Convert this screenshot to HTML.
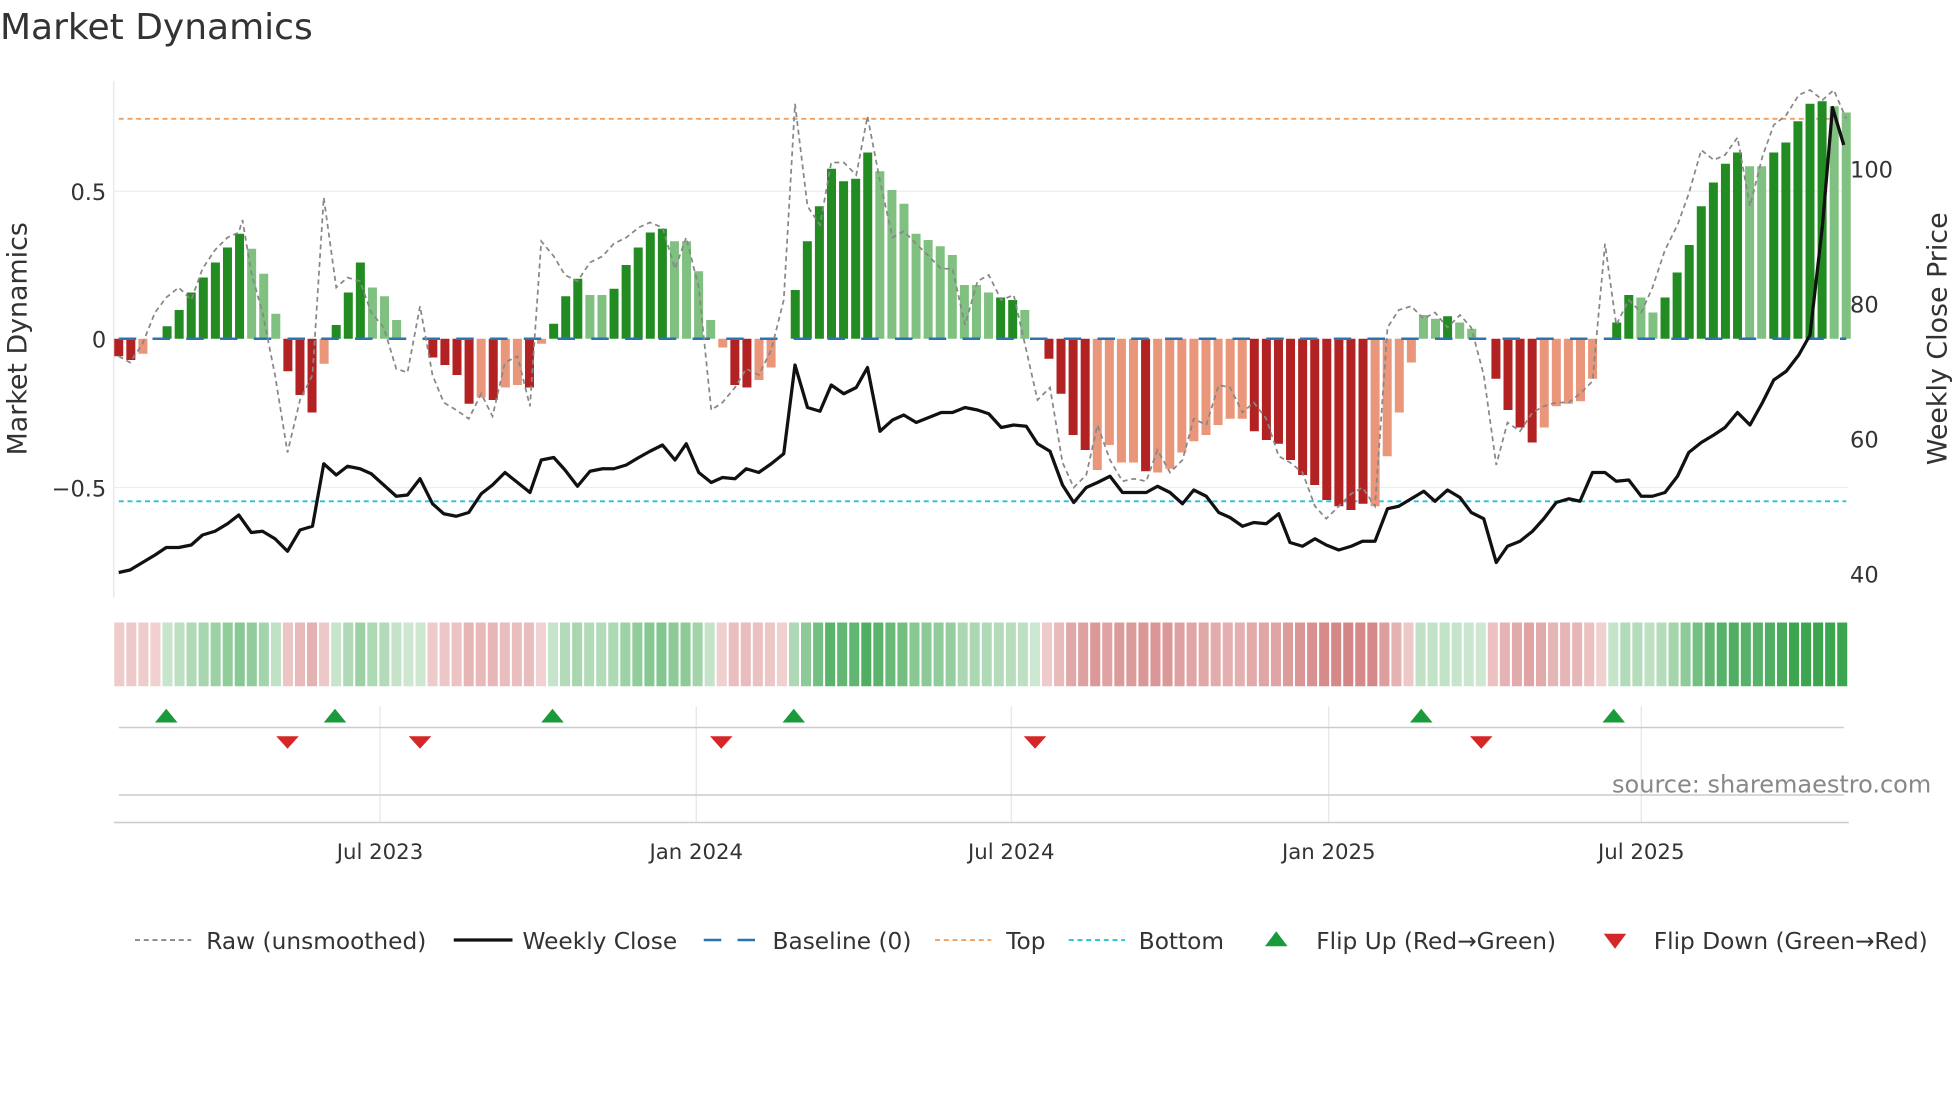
<!DOCTYPE html>
<html><head><meta charset="utf-8"><style>
html,body{margin:0;padding:0;background:#fff;width:1960px;height:1102px;overflow:hidden}
svg{display:block}
text{font-family:"DejaVu Sans","Liberation Sans",sans-serif;fill:#333}
</style></head><body>
<svg id="s" width="1960" height="1102" viewBox="0 0 1568 881.6" xmlns="http://www.w3.org/2000/svg">
<text x="0" y="31" font-size="28.8" fill="#333">Market Dynamics</text>
<line x1="91" y1="65" x2="91" y2="478" stroke="#e4e4ec" stroke-width="1"/>
<line x1="91" y1="153" x2="1479" y2="153" stroke="#eceef4" stroke-width="1"/>
<line x1="91" y1="390" x2="1479" y2="390" stroke="#eceef4" stroke-width="1"/>
<text x="85" y="160" font-size="18" text-anchor="end">0.5</text>
<text x="85" y="278" font-size="18" text-anchor="end">0</text>
<text x="85" y="397" font-size="18" text-anchor="end">−0.5</text>
<text transform="translate(21,271) rotate(-90)" font-size="21.5" text-anchor="middle">Market Dynamics</text>
<text x="1480" y="142" font-size="18">100</text>
<text x="1480" y="250" font-size="18">80</text>
<text x="1480" y="358" font-size="18">60</text>
<text x="1480" y="466" font-size="18">40</text>
<text transform="translate(1557,271) rotate(-90)" font-size="21.5" text-anchor="middle">Weekly Close Price</text>
<line x1="95" y1="95" x2="1477" y2="95" stroke="#f0a060" stroke-width="1.5" stroke-dasharray="4,3"/>
<line x1="95" y1="401" x2="1477" y2="401" stroke="#22c4d8" stroke-width="1.5" stroke-dasharray="4,3"/>
<g id="bars"></g>
<line x1="95" y1="271" x2="1477" y2="271" stroke="#2a74b0" stroke-width="2" stroke-dasharray="14,13"/>
<polyline id="raw" fill="none" stroke="#888" stroke-width="1.4" stroke-dasharray="4,3"/>
<polyline id="close" fill="none" stroke="#111" stroke-width="2.6" stroke-linejoin="round"/>
<g id="heat"></g>
<g stroke="#e6e6e6" stroke-width="1">
<line x1="304" y1="565" x2="304" y2="658"/><line x1="557" y1="565" x2="557" y2="658"/><line x1="809" y1="565" x2="809" y2="658"/><line x1="1063" y1="565" x2="1063" y2="658"/><line x1="1313" y1="565" x2="1313" y2="658"/>
</g>
<line x1="95" y1="582" x2="1475" y2="582" stroke="#ccc" stroke-width="1.2"/>
<line x1="95" y1="636" x2="1475" y2="636" stroke="#ccc" stroke-width="1.2"/>
<line x1="91" y1="658" x2="1479" y2="658" stroke="#ccc" stroke-width="1.2"/>
<g id="flips"></g>
<text x="1545" y="634" font-size="19.2" text-anchor="end" style="fill:#888">source: sharemaestro.com</text>
<text x="304" y="687" font-size="17" text-anchor="middle">Jul 2023</text>
<text x="557" y="687" font-size="17" text-anchor="middle">Jan 2024</text>
<text x="809" y="687" font-size="17" text-anchor="middle">Jul 2024</text>
<text x="1063" y="687" font-size="17" text-anchor="middle">Jan 2025</text>
<text x="1313" y="687" font-size="17" text-anchor="middle">Jul 2025</text>
<line x1="108" y1="752" x2="153" y2="752" stroke="#888" stroke-width="1.5" stroke-dasharray="4,3"/>
<text x="165" y="759" font-size="18.6">Raw (unsmoothed)</text>
<line x1="363" y1="752" x2="410" y2="752" stroke="#111" stroke-width="2.6"/>
<text x="418" y="759" font-size="18.6">Weekly Close</text>
<line x1="563" y1="752" x2="605" y2="752" stroke="#2a74b0" stroke-width="2" stroke-dasharray="14,13"/>
<text x="618" y="759" font-size="18.6">Baseline (0)</text>
<line x1="748" y1="752" x2="793" y2="752" stroke="#f0a060" stroke-width="1.5" stroke-dasharray="4,3"/>
<text x="805" y="759" font-size="18.6">Top</text>
<line x1="855" y1="752" x2="900" y2="752" stroke="#22c4d8" stroke-width="1.5" stroke-dasharray="4,3"/>
<text x="911" y="759" font-size="18.6">Bottom</text>
<polygon points="1012,757 1030,757 1021,745" fill="#1a9a3a"/>
<text x="1053" y="759" font-size="18.6">Flip Up (Red→Green)</text>
<polygon points="1283,747 1301,747 1292,759" fill="#d62728"/>
<text x="1323" y="759" font-size="18.6">Flip Down (Green→Red)</text>
</svg>
<script>
var B="R285 R288 r283 0 G261 G248 G234 G222 G210 G198 G187 g199 g219 g251 R297 R316 R330 r291 G260 G234 G210 g230 g237 g256 0 0 R286 R292 R300 R323 r318 R320 r310 r308 R310 r275 G259 G237 G223 g236 g236 G231 G212 G198 G186 G183 g193 g193 g217 g256 r278 R308 R310 r304 r294 0 G232 G193 G165 G135 G145 G143 G122 g137 g152 g163 g187 g192 g197 g204 g228 g228 g234 G238 G240 g248 0 R287 R315 R348 R360 r376 r356 r370 r370 R377 r378 r375 r362 r353 r348 r340 r335 r335 R345 R352 R355 R368 R380 R388 R400 R405 R408 R403 r405 r365 r330 r290 g252 g255 G253 g258 g263 0 R303 R328 R342 R354 r342 r325 r323 r321 r303 0 G258 G236 g238 g250 G238 G218 G196 G165 G146 G131 G122 g133 g133 G122 G114 G97 G83 G81 g85 g90".split(" ");
var ns="http://www.w3.org/2000/svg",n=B.length,x0=95,dx=(1477-95)/(n-1);
var col={G:"#228b22",g:"#80c080",R:"#b22222",r:"#e9967a"};
function mk(p,t,a){var e=document.createElementNS(ns,t);for(var k in a)e.setAttribute(k,a[k]);document.getElementById(p).appendChild(e);}
function mix(a,b,t){return "rgb("+[0,1,2].map(function(i){return Math.round(a[i]+(b[i]-a[i])*t)}).join(",")+")";}
var prevV=0;
for(var i=0;i<n;i++){var s=B[i],x=x0+i*dx,ty=s[0],v;
 if(s==="0"){v=prevV>0?0.02:-0.02;}else{var y=+s.slice(1);v=(271-y)/236;
  mk("bars","rect",{x:x-3.6,y:Math.min(y,271),width:7.2,height:Math.abs(271-y),fill:col[ty]});}
 prevV=v;
 var t=Math.min(1,0.15+Math.abs(v)/0.85);
 var c=v>=0?mix([235,245,235],[60,165,80],t):mix([248,228,228],[205,115,115],t);
 mk("heat","rect",{x:91+i*(1388/n)+0.4,y:498,width:1388/n-1.6,height:51,fill:c});
}
var C="95,458 104,456 114,450 124,444 133,438 143,438 153,436 162,428 172,425 182,419 191,412 201,426 210,425 220,431 230,441 240,424 250,421 259,371 269,380 278,373 288,375 297,379 307,388 317,397 326,396 336,383 346,403 355,411 365,413 375,410 385,395 394,388 404,378 414,386 424,394 433,368 443,366 452,376 462,389 472,377 482,375 491,375 501,372 511,366 520,361 530,356 540,368 549,355 559,378 569,386 578,382 588,383 597,375 607,378 617,371 627,363 636,292 646,326 656,329 665,308 675,315 685,310 694,294 704,345 714,336 723,332 733,338 743,334 753,330 762,330 772,326 782,328 791,331 801,342 811,340 821,341 830,355 840,361 850,388 859,402 869,390 878,386 888,381 898,394 907,394 917,394 926,389 936,394 946,403 955,392 965,397 975,410 984,414 994,421 1003,418 1013,419 1023,411 1032,434 1042,437 1052,431 1061,436 1071,440 1081,437 1090,433 1100,433 1110,407 1119,405 1129,399 1139,393 1148,401 1158,392 1168,398 1177,410 1187,415 1197,450 1206,437 1216,433 1226,425 1235,415 1245,402 1255,399 1264,401 1274,378 1284,378 1293,385 1303,384 1313,397 1322,397 1332,394 1342,381 1351,362 1361,354 1371,348 1380,342 1390,330 1400,340 1410,322 1419,304 1429,297 1439,284 1448,268 1458,180 1466,86 1475,116";
document.getElementById("close").setAttribute("points",C);
var R="95,285 104,290 114,275 124,250 133,238 143,230 153,240 162,215 172,200 182,190 191,186 194,176 201,218 210,250 220,300 230,362 240,320 250,300 259,158 269,230 278,222 288,225 297,250 307,262 317,295 326,298 336,245 346,300 355,322 365,328 375,335 385,315 394,333 404,290 414,285 424,325 433,193 443,205 452,220 462,225 472,210 482,205 491,195 501,190 511,182 520,178 530,182 540,215 549,190 559,230 569,328 578,322 588,310 597,295 607,300 617,280 627,240 636,83 646,165 656,180 665,130 675,130 685,140 694,93 704,145 714,190 723,185 733,195 743,205 753,215 762,215 772,260 782,225 791,220 801,240 811,236 821,280 830,320 840,310 850,370 859,390 869,380 878,340 888,368 898,385 907,383 917,385 926,360 936,378 946,368 955,335 965,340 975,308 984,310 994,330 1003,322 1013,335 1023,365 1032,370 1042,378 1052,405 1061,415 1071,405 1081,395 1090,390 1100,405 1110,262 1119,248 1129,245 1139,255 1148,250 1158,262 1168,252 1177,262 1187,300 1197,372 1206,338 1216,345 1226,330 1235,325 1245,322 1255,322 1264,315 1274,305 1284,195 1293,260 1303,240 1313,250 1322,230 1332,200 1342,180 1351,155 1361,120 1371,128 1380,124 1390,110 1400,165 1410,125 1419,100 1429,92 1439,76 1448,72 1458,80 1467,72 1477,95";
document.getElementById("raw").setAttribute("points",R);
[133,268,442,635,1137,1291].forEach(function(x){mk("flips","polygon",{points:(x-9)+",578 "+(x+9)+",578 "+x+",567",fill:"#1a9a3a"});});
[230,336,577,828,1185].forEach(function(x){mk("flips","polygon",{points:(x-9)+",589 "+(x+9)+",589 "+x+",599",fill:"#d62728"});});
</script>
</body></html>
